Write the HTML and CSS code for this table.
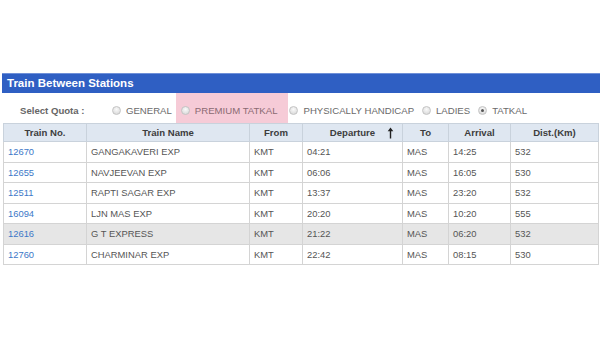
FILE: index.html
```html
<!DOCTYPE html>
<html>
<head>
<meta charset="utf-8">
<link rel="stylesheet" href="styles.css">
</head>
<body>
<div class="page">
  <div class="titlebar">Train Between Stations</div>
  <div class="quota">
    <span class="quota-label">Select Quota :</span>
    <span class="opt opt-general"><span class="radio"></span>GENERAL</span>
    <span class="opt opt-premium"><span class="radio"></span>PREMIUM TATKAL</span>
    <span class="opt opt-ph"><span class="radio"></span>PHYSICALLY HANDICAP</span>
    <span class="opt opt-ladies"><span class="radio"></span>LADIES</span>
    <span class="opt opt-tatkal"><span class="radio checked"></span>TATKAL</span>
  </div>
  <table class="trains">
    <colgroup>
      <col class="c-no"><col class="c-name"><col class="c-from"><col class="c-dep"><col class="c-to"><col class="c-arr"><col class="c-dist">
    </colgroup>
    <thead>
      <tr>
        <th>Train No.</th>
        <th>Train Name</th>
        <th>From</th>
        <th class="dep"><span class="dep-label">Departure</span><svg class="sort" width="7" height="12" viewBox="0 0 7 12"><path d="M3.5 0.5 L6.3 4.3 L4.2 4.3 L4.2 11.5 L2.8 11.5 L2.8 4.3 L0.7 4.3 Z" fill="#222"/></svg></th>
        <th>To</th>
        <th>Arrival</th>
        <th>Dist.(Km)</th>
      </tr>
    </thead>
    <tbody>
      <tr><td class="no">12670</td><td>GANGAKAVERI EXP</td><td>KMT</td><td>04:21</td><td>MAS</td><td>14:25</td><td>532</td></tr>
      <tr><td class="no">12655</td><td>NAVJEEVAN EXP</td><td>KMT</td><td>06:06</td><td>MAS</td><td>16:05</td><td>530</td></tr>
      <tr><td class="no">12511</td><td>RAPTI SAGAR EXP</td><td>KMT</td><td>13:37</td><td>MAS</td><td>23:20</td><td>532</td></tr>
      <tr><td class="no">16094</td><td>LJN MAS EXP</td><td>KMT</td><td>20:20</td><td>MAS</td><td>10:20</td><td>555</td></tr>
      <tr class="hl"><td class="no">12616</td><td>G T EXPRESS</td><td>KMT</td><td>21:22</td><td>MAS</td><td>06:20</td><td>532</td></tr>
      <tr><td class="no">12760</td><td>CHARMINAR EXP</td><td>KMT</td><td>22:42</td><td>MAS</td><td>08:15</td><td>530</td></tr>
    </tbody>
  </table>
</div>
</body>
</html>
```
FILE: styles.css
```css
html, body {
  margin: 0;
  padding: 0;
  background: #fff;
}
body {
  font-family: "Liberation Sans", Arial, sans-serif;
  width: 600px;
  height: 338px;
  overflow: hidden;
}
.page {
  padding-top: 73px;
  padding-left: 2px;
}
.titlebar {
  height: 20px;
  box-sizing: border-box;
  background: #2f5fc3;
  border-top: 1px solid #6f90d8;
  color: #fff;
  font-weight: bold;
  font-size: 11.5px;
  line-height: 19px;
  padding-left: 5px;
}
.quota {
  height: 30px;
  display: flex;
  align-items: stretch;
  font-size: 9.6px;
  color: #6a6a6a;
}
.quota-label {
  font-weight: bold;
  color: #666;
  margin-left: 18px;
  width: 90px;
  padding-top: 4px;
  display: flex;
  align-items: center;
}
.opt {
  display: flex;
  align-items: center;
  box-sizing: border-box;
  padding-top: 4px;
}
.radio {
  width: 9px;
  height: 9px;
  border-radius: 50%;
  box-sizing: border-box;
  border: 1px solid #c4c4c4;
  background: radial-gradient(circle at 50% 35%, #fafafa, #d4d4d4);
  margin-right: 5px;
  position: relative;
}
.radio.checked::after {
  content: "";
  position: absolute;
  left: 2px;
  top: 2px;
  width: 3px;
  height: 3px;
  border-radius: 50%;
  background: #555;
}
.opt-general { margin-left: 2px; }
.opt-premium {
  margin-left: 4px;
  background: #f6cbd7;
  padding-left: 5px;
  padding-right: 11px;
  color: #8a6a72;
}
.opt-ph { margin-left: 1px; }
.opt-ladies { margin-left: 8px; }
.opt-tatkal { margin-left: 8px; }

.trains {
  border-collapse: collapse;
  table-layout: fixed;
  width: 596px;
  margin-left: 1px;
  font-size: 9.4px;
}
.c-no { width: 83px; }
.c-name { width: 163px; }
.c-from { width: 53px; }
.c-dep { width: 100px; }
.c-to { width: 46px; }
.c-arr { width: 62px; }
.c-dist { width: 88px; }
.trains th, .trains td {
  border: 1px solid #d4d4d4;
  padding: 0 0 0 4px;
  white-space: nowrap;
  overflow: hidden;
}
.trains th {
  background: #dfe7f1;
  color: #3d3d3d;
  font-weight: bold;
  font-size: 9.6px;
  height: 17px;
  text-align: center;
  padding: 0;
  border-color: #c9d2dc;
}
.trains th.dep {
  position: relative;
}
.sort {
  position: absolute;
  right: 8px;
  top: 3px;
}
.trains td {
  color: #555;
  height: 19.5px;
}
.trains td.no {
  color: #3c78c8;
}
.trains tr.hl td {
  background: #e6e6e6;
}
```
